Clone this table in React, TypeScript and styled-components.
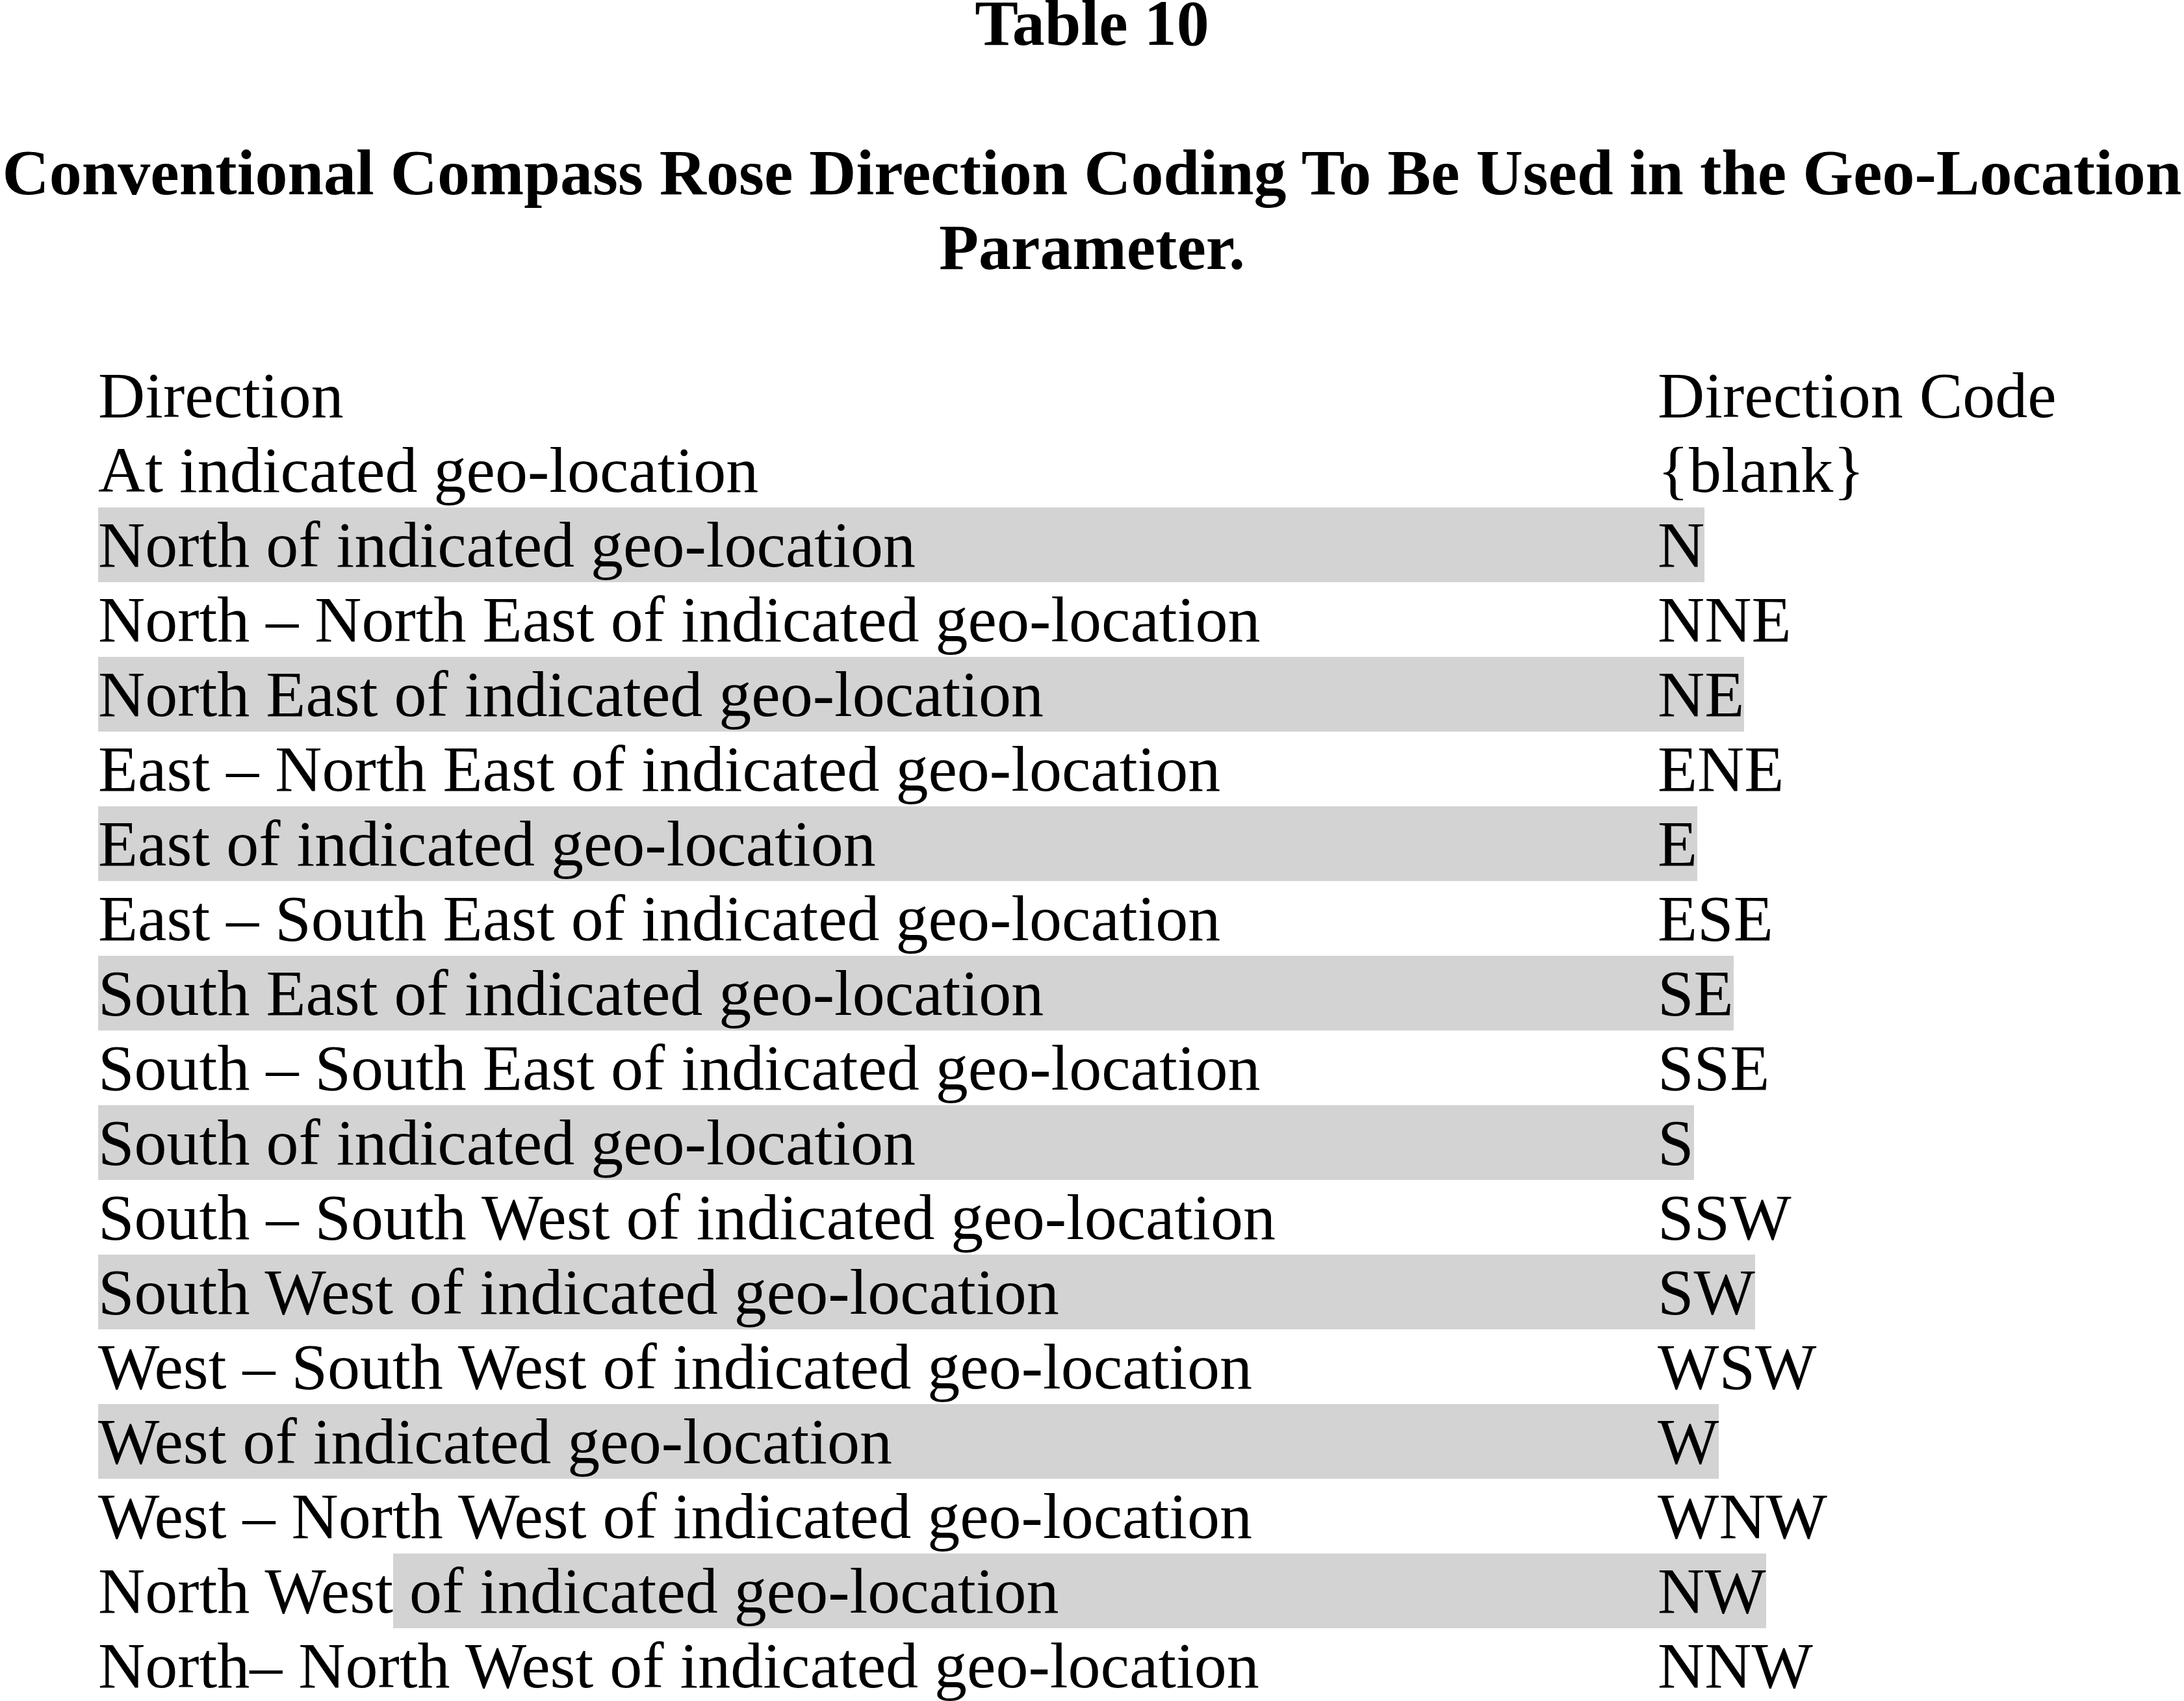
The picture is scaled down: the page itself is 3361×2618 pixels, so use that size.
import React from "react";
import styled, { createGlobalStyle, css } from "styled-components";

const GlobalStyle = createGlobalStyle`
  html, body {
    margin: 0;
    padding: 0;
    overflow: hidden;
    background: #ffffff;
  }
`;

const SHADE = "#d3d3d3";

const Page = styled.div`
  display: flex;
  flex-direction: column;
  width: 3361px;
  height: 2618px;
  overflow: hidden;
  font-family: "Liberation Serif", "Times New Roman", serif;
  font-size: 100px;
  line-height: 115px;
  color: #000000;
`;

const Heading = styled.header`
  display: flex;
  flex-direction: column;
  margin-top: -22px;
  font-weight: 700;
`;

const TitleLine = styled.div`
  text-align: center;
  white-space: nowrap;
`;

const Subtitle = styled.h1`
  margin: 115px 0 0 0;
  font-size: inherit;
  font-weight: 700;
  line-height: inherit;
`;

const Table = styled.div`
  display: flex;
  flex-direction: column;
  margin-top: 113px;
  padding-left: 151px;
`;

const Row = styled.div`
  display: flex;
  height: 115px;
  white-space: nowrap;
`;

const shaded = css`
  background: ${SHADE};
`;

const DirCell = styled.div<{ $shade?: boolean }>`
  display: flex;
  flex: none;
  width: 2400px;
  ${(p) => (p.$shade ? shaded : "")}
`;

const Plain = styled.span``;

const PartShade = styled.span`
  flex: 1;
  padding-left: 0.25em;
  background: ${SHADE};
`;

const CodeCell = styled.div<{ $shade?: boolean }>`
  flex: none;
  ${(p) => (p.$shade ? shaded : "")}
`;

type RowData = {
  dir: string;
  code: string;
  shade?: boolean;
  partial?: [string, string];
};

const rows: RowData[] = [
  { dir: "Direction", code: "Direction Code" },
  { dir: "At indicated geo-location", code: "{blank}" },
  { dir: "North of indicated geo-location", code: "N", shade: true },
  { dir: "North \u2013 North East of indicated geo-location", code: "NNE" },
  { dir: "North East of indicated geo-location", code: "NE", shade: true },
  { dir: "East \u2013 North East of indicated geo-location", code: "ENE" },
  { dir: "East of indicated geo-location", code: "E", shade: true },
  { dir: "East \u2013 South East of indicated geo-location", code: "ESE" },
  { dir: "South East of indicated geo-location", code: "SE", shade: true },
  { dir: "South \u2013 South East of indicated geo-location", code: "SSE" },
  { dir: "South of indicated geo-location", code: "S", shade: true },
  { dir: "South \u2013 South West of indicated geo-location", code: "SSW" },
  { dir: "South West of indicated geo-location", code: "SW", shade: true },
  { dir: "West \u2013 South West of indicated geo-location", code: "WSW" },
  { dir: "West of indicated geo-location", code: "W", shade: true },
  { dir: "West \u2013 North West of indicated geo-location", code: "WNW" },
  {
    dir: "North West of indicated geo-location",
    code: "NW",
    partial: ["North West", "of indicated geo-location"],
  },
  { dir: "North\u2013 North West of indicated geo-location", code: "NNW" },
];

export default function App() {
  return (
    <>
      <GlobalStyle />
      <Page>
        <Heading>
          <TitleLine>Table 10</TitleLine>
          <Subtitle>
            <TitleLine>
              Conventional Compass Rose Direction Coding To Be Used in the Geo-Location
            </TitleLine>
            <TitleLine>Parameter.</TitleLine>
          </Subtitle>
        </Heading>
        <Table>
          {rows.map((r, i) => (
            <Row key={i}>
              {r.partial ? (
                <DirCell>
                  <Plain>{r.partial[0]}</Plain>
                  <PartShade>{r.partial[1]}</PartShade>
                </DirCell>
              ) : (
                <DirCell $shade={r.shade}>{r.dir}</DirCell>
              )}
              <CodeCell $shade={r.shade || !!r.partial}>{r.code}</CodeCell>
            </Row>
          ))}
        </Table>
      </Page>
    </>
  );
}
